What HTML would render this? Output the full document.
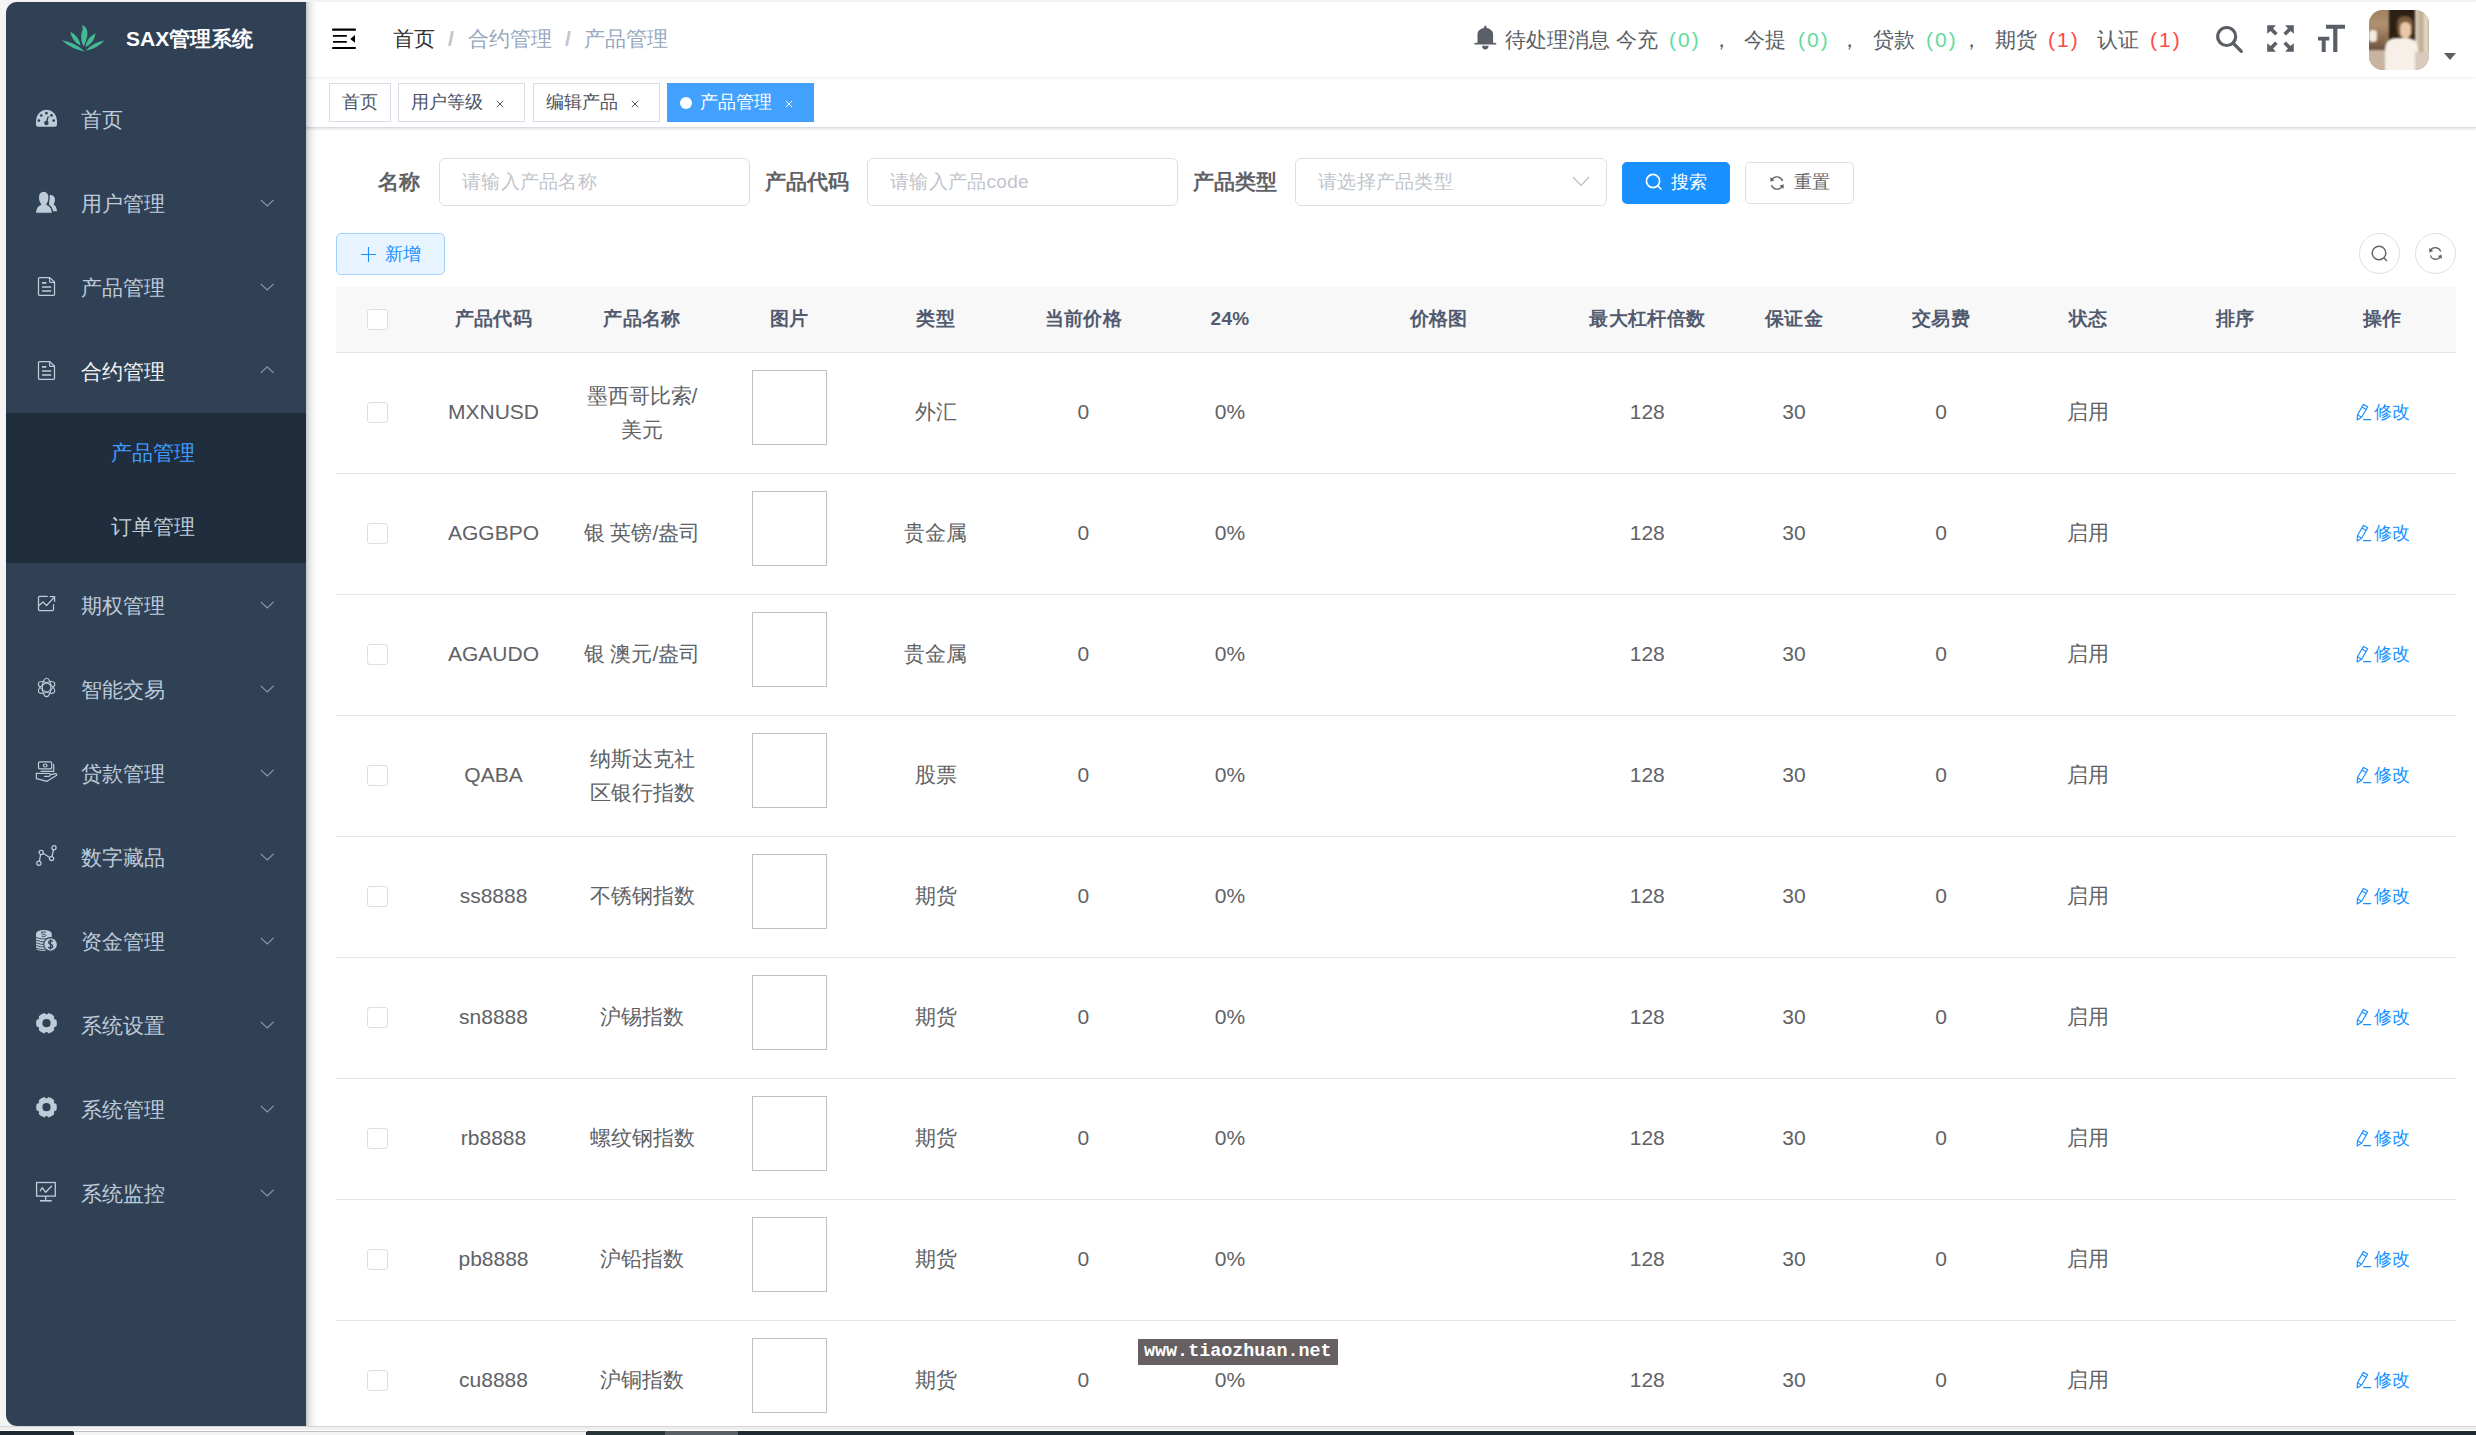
<!DOCTYPE html><html><head><meta charset="utf-8"><style>
*{box-sizing:border-box;margin:0;padding:0}
html,body{width:2476px;height:1435px;overflow:hidden;background:#f4f4f4;font-family:"Liberation Sans", sans-serif;}
.a{position:absolute}
.t{position:absolute;white-space:nowrap}
</style></head><body>
<div class="a" style="left:0px;top:1426px;width:2476px;height:1px;z-index:0;background:#d6d6d6"></div>
<div class="a" style="left:0px;top:1427px;width:2476px;height:3px;z-index:0;background:#efefef"></div>
<div class="a" style="left:0px;top:1430px;width:2476px;height:1px;z-index:0;background:#fff"></div>
<div class="a" style="left:0px;top:1431px;width:2476px;height:4px;z-index:0;background:#1f2a30"></div>
<div class="a" style="left:73px;top:1431px;width:514px;height:1px;z-index:0;background:#c0c0c0"></div>
<div class="a" style="left:74px;top:1432px;width:512px;height:3px;z-index:0;background:#f4f4f4"></div>
<div class="a" style="left:587px;top:1431px;width:78px;height:4px;z-index:0;background:#283539"></div>
<div class="a" style="left:665px;top:1431px;width:73px;height:4px;z-index:0;background:#596064"></div>
<div class="a" style="left:306px;top:2px;width:2170px;height:1424px;z-index:0;background:#fff"></div>
<div class="a" style="left:6px;top:2px;width:300px;height:1424px;z-index:3;background:#304156;border-radius:11px 0 0 11px"></div>
<div class="a" style="left:306px;top:2px;width:12px;height:1424px;z-index:3;background:linear-gradient(90deg,rgba(0,21,41,.24),rgba(0,21,41,.12) 25%,rgba(0,21,41,.04) 60%,rgba(0,21,41,0))"></div>
<svg class="a" style="left:0px;top:0px;z-index:6" width="120" height="60" viewBox="0 0 120 60"><g fill="#45b894"><path d="M83.6 46.4 C80.6 41 80.6 35 82.4 30.5 C83 28.8 82.6 26.6 82 25 C85.2 26 87.6 29.2 87.4 33.6 C87.2 38.6 85.6 42.6 83.6 46.4Z"/><path d="M80.70 45.80 Q79.19 36.06 70.30 31.80 Q71.81 41.54 80.70 45.80Z"/><path d="M85.20 47.20 Q94.13 42.96 95.70 33.20 Q86.77 37.44 85.20 47.20Z"/><path d="M84.80 51.40 Q74.95 42.43 61.80 40.30 Q71.65 49.27 84.80 51.40Z"/><path d="M85.40 50.80 Q96.80 49.00 104.60 40.50 Q93.20 42.30 85.40 50.80Z"/></g></svg>
<div class="t" style="left:126px;top:27px;font-size:21px;line-height:24px;color:#fff;font-weight:bold;z-index:6;">SAX管理系统</div>
<svg class="a" style="left:32px;top:103px;z-index:6" width="30" height="30" viewBox="0 0 30 30"><path fill="#bfcbd9" d="M4 17.3 A10.5 10.5 0 0 1 25 17.3 L25 21.6 Q25 23.8 22.8 23.8 L6.2 23.8 Q4 23.8 4 21.6Z"/><g fill="#304156"><circle cx="6.9" cy="17.6" r="1.35"/><circle cx="9.3" cy="12.5" r="1.35"/><circle cx="14.4" cy="10.2" r="1.35"/><circle cx="19.5" cy="12.4" r="1.35"/><circle cx="21.7" cy="17.6" r="1.35"/><path d="M15.6 13.2 L16.9 13.6 L15.2 19.5 L13.7 19.2Z"/><circle cx="14.4" cy="20.1" r="2.25"/></g></svg>
<div class="t" style="left:81px;top:108px;font-size:21px;line-height:24px;color:#bfcbd9;font-weight:normal;z-index:6;">首页</div>
<svg class="a" style="left:32px;top:187px;z-index:6" width="30" height="30" viewBox="0 0 30 30"><g fill="#bfcbd9"><path d="M17.6 8 C21 7.6 23.2 10 23 13 C22.9 14.8 22.2 16.3 21.6 17.5 C23.5 18.6 24.8 21 25 24.3 L21 24.3 C20.6 21.5 19.2 19 17 17.8Z"/></g><path fill="#bfcbd9" stroke="#304156" stroke-width="1.1" d="M11.7 4.2 C15.2 4.2 17.2 7.2 17 11 C16.9 13.8 15.9 16 14.9 17.4 C18.6 18.6 20.3 22 20.3 26.2 L3.5 26.2 C3.5 22 5.2 18.6 8.6 17.4 C7.5 16 6.5 13.8 6.4 11 C6.2 7.2 8.2 4.2 11.7 4.2Z"/></svg>
<div class="t" style="left:81px;top:192px;font-size:21px;line-height:24px;color:#bfcbd9;font-weight:normal;z-index:6;">用户管理</div>
<svg class="a" style="left:259.5px;top:198.9px;z-index:6" width="15" height="9" viewBox="0 0 15 9"><path d="M0.8 0.8 L7.2 6.9 L13.6 0.8" fill="none" stroke="#8e99a8" stroke-width="1.15"/></svg>
<svg class="a" style="left:32px;top:271px;z-index:6" width="30" height="30" viewBox="0 0 30 30"><g fill="none" stroke="#bfcbd9" stroke-width="1.25" stroke-linejoin="round"><path d="M7.6 6.6 L17.8 6.6 L22.5 11 L22.5 23.6 Q22.5 24.4 21.7 24.4 L7.3 24.4 Q6.5 24.4 6.5 23.6 L6.5 7.6 Q6.5 6.6 7.6 6.6Z"/><path d="M17.6 7 L17.6 10.6 Q17.6 11.4 18.4 11.4 L22.2 11.4"/></g><g stroke="#bfcbd9" stroke-width="1.7"><path d="M10 11.9 L14.4 11.9 M10 16 L19.2 16 M10 20 L19.2 20"/></g></svg>
<div class="t" style="left:81px;top:276px;font-size:21px;line-height:24px;color:#bfcbd9;font-weight:normal;z-index:6;">产品管理</div>
<svg class="a" style="left:259.5px;top:282.9px;z-index:6" width="15" height="9" viewBox="0 0 15 9"><path d="M0.8 0.8 L7.2 6.9 L13.6 0.8" fill="none" stroke="#8e99a8" stroke-width="1.15"/></svg>
<svg class="a" style="left:32px;top:355px;z-index:6" width="30" height="30" viewBox="0 0 30 30"><g fill="none" stroke="#bfcbd9" stroke-width="1.25" stroke-linejoin="round"><path d="M7.6 6.6 L17.8 6.6 L22.5 11 L22.5 23.6 Q22.5 24.4 21.7 24.4 L7.3 24.4 Q6.5 24.4 6.5 23.6 L6.5 7.6 Q6.5 6.6 7.6 6.6Z"/><path d="M17.6 7 L17.6 10.6 Q17.6 11.4 18.4 11.4 L22.2 11.4"/></g><g stroke="#bfcbd9" stroke-width="1.7"><path d="M10 11.9 L14.4 11.9 M10 16 L19.2 16 M10 20 L19.2 20"/></g></svg>
<div class="t" style="left:81px;top:360px;font-size:21px;line-height:24px;color:#f4f4f5;font-weight:normal;z-index:6;">合约管理</div>
<svg class="a" style="left:259.5px;top:365.6px;z-index:6" width="15" height="9" viewBox="0 0 15 9"><path d="M0.8 6.9 L7.2 0.8 L13.6 6.9" fill="none" stroke="#8e99a8" stroke-width="1.15"/></svg>
<div class="a" style="left:6px;top:413px;width:300px;height:150px;z-index:4;background:#1f2d3d"></div>
<div class="t" style="left:111px;top:440.5px;font-size:21px;line-height:24px;color:#409eff;font-weight:normal;z-index:6;">产品管理</div>
<div class="t" style="left:111px;top:515px;font-size:21px;line-height:24px;color:#bfcbd9;font-weight:normal;z-index:6;">订单管理</div>
<svg class="a" style="left:32px;top:589px;z-index:6" width="30" height="30" viewBox="0 0 30 30"><g fill="none" stroke="#bfcbd9" stroke-width="1.25" stroke-linejoin="round" stroke-linecap="round"><path d="M15.3 7.3 L7.5 7.3 Q6.5 7.3 6.5 8.3 L6.5 20.5 Q6.5 21.5 7.5 21.5 L20.5 21.5 Q21.5 21.5 21.5 20.5 L21.5 15.5"/><path d="M6.9 16.5 L10.9 13 L14.6 16.5 L22.2 8.4"/><path d="M18.2 7.5 L22.6 7.5 L22.6 12.3"/></g></svg>
<div class="t" style="left:81px;top:594px;font-size:21px;line-height:24px;color:#bfcbd9;font-weight:normal;z-index:6;">期权管理</div>
<svg class="a" style="left:259.5px;top:600.9px;z-index:6" width="15" height="9" viewBox="0 0 15 9"><path d="M0.8 0.8 L7.2 6.9 L13.6 0.8" fill="none" stroke="#8e99a8" stroke-width="1.15"/></svg>
<svg class="a" style="left:32px;top:673px;z-index:6" width="30" height="30" viewBox="0 0 30 30"><g fill="none" stroke="#bfcbd9" stroke-width="1.15"><ellipse cx="14.6" cy="14.4" rx="4.3" ry="9.2"/><ellipse cx="14.6" cy="14.4" rx="4.3" ry="9.2" transform="rotate(60 14.6 14.4)"/><ellipse cx="14.6" cy="14.4" rx="4.3" ry="9.2" transform="rotate(120 14.6 14.4)"/></g></svg>
<div class="t" style="left:81px;top:678px;font-size:21px;line-height:24px;color:#bfcbd9;font-weight:normal;z-index:6;">智能交易</div>
<svg class="a" style="left:259.5px;top:684.9px;z-index:6" width="15" height="9" viewBox="0 0 15 9"><path d="M0.8 0.8 L7.2 6.9 L13.6 0.8" fill="none" stroke="#8e99a8" stroke-width="1.15"/></svg>
<svg class="a" style="left:32px;top:757px;z-index:6" width="30" height="30" viewBox="0 0 30 30"><g fill="none" stroke="#bfcbd9" stroke-width="1.2" stroke-linejoin="round" stroke-linecap="round"><rect x="6.5" y="4.8" width="13.2" height="7" rx="1"/><ellipse cx="13.2" cy="8.5" rx="1.9" ry="1.5"/><path d="M21.7 7.3 L21.7 14.4 L9.2 14.4"/><path d="M4.4 16.3 L17.5 16.5 Q18.6 16.8 18.3 18.3 Q17.8 19.4 16.8 19.4 L12.5 19.4"/><path d="M4.4 16.3 L4.4 21.7 L15 24.3 L24.7 18.2 Q24.6 16.6 23.2 16.7 L18.8 17.6"/></g></svg>
<div class="t" style="left:81px;top:762px;font-size:21px;line-height:24px;color:#bfcbd9;font-weight:normal;z-index:6;">贷款管理</div>
<svg class="a" style="left:259.5px;top:768.9px;z-index:6" width="15" height="9" viewBox="0 0 15 9"><path d="M0.8 0.8 L7.2 6.9 L13.6 0.8" fill="none" stroke="#8e99a8" stroke-width="1.15"/></svg>
<svg class="a" style="left:32px;top:841px;z-index:6" width="30" height="30" viewBox="0 0 30 30"><g fill="none" stroke="#bfcbd9" stroke-width="1.25"><circle cx="9.2" cy="11.4" r="2.1"/><circle cx="22" cy="6.7" r="2.1"/><circle cx="19.6" cy="17.6" r="2.1"/><circle cx="6.9" cy="22.3" r="2.1"/><path d="M7.4 20.2 L8.6 13.5 M11.2 12.2 L17.6 16.6 M20 15.5 L21.4 8.8"/></g></svg>
<div class="t" style="left:81px;top:846px;font-size:21px;line-height:24px;color:#bfcbd9;font-weight:normal;z-index:6;">数字藏品</div>
<svg class="a" style="left:259.5px;top:852.9px;z-index:6" width="15" height="9" viewBox="0 0 15 9"><path d="M0.8 0.8 L7.2 6.9 L13.6 0.8" fill="none" stroke="#8e99a8" stroke-width="1.15"/></svg>
<svg class="a" style="left:32px;top:925px;z-index:6" width="30" height="30" viewBox="0 0 30 30"><g fill="#bfcbd9"><path d="M4 8.8 A7.9 3.8 0 0 1 19.8 8.8 L19.8 14 L13 25.9 Q4 26 4 23 Z"/></g><g fill="none" stroke="#304156" stroke-width="0.9"><path d="M4 12.5 Q11.9 15.5 19.8 12.3"/><path d="M4 15.2 Q9 17.2 13.5 16.8"/><path d="M4 17.8 Q9 19.8 12.6 19.4"/><path d="M4 20.5 Q9 22.5 12.6 22"/><path d="M4 23.1 Q9 25 13 24.7"/><path d="M14 7.3 Q11.5 6.3 9.6 7.2 Q8.6 8 10.2 8.8 L13.2 9.6 Q14.6 10.5 13.3 11.2 Q11.5 12 9.3 10.9"/></g><circle cx="18.6" cy="19.4" r="6.8" fill="#bfcbd9" stroke="#304156" stroke-width="1.1"/><g fill="none" stroke="#304156" stroke-width="1.3"><path d="M20.9 16.6 Q19.8 15.6 18.4 15.7 Q16.6 15.9 16.6 17.4 Q16.7 18.7 18.7 19.3 Q20.8 20 20.8 21.4 Q20.7 23 18.6 23.1 Q17 23.1 16.1 22.2 M18.5 14.2 L18.5 24.6"/></g></svg>
<div class="t" style="left:81px;top:930px;font-size:21px;line-height:24px;color:#bfcbd9;font-weight:normal;z-index:6;">资金管理</div>
<svg class="a" style="left:259.5px;top:936.9px;z-index:6" width="15" height="9" viewBox="0 0 15 9"><path d="M0.8 0.8 L7.2 6.9 L13.6 0.8" fill="none" stroke="#8e99a8" stroke-width="1.15"/></svg>
<svg class="a" style="left:32px;top:1009px;z-index:6" width="30" height="30" viewBox="0 0 30 30"><path fill="#bfcbd9" fill-rule="evenodd" d="M24.33 10.81 Q25.50 14.20 24.33 17.59 Q20.91 17.90 22.35 21.02 Q20.00 23.73 16.48 24.41 Q14.50 21.60 12.52 24.41 Q9.00 23.73 6.65 21.02 Q8.09 17.90 4.67 17.59 Q3.50 14.20 4.67 10.81 Q8.09 10.50 6.65 7.38 Q9.00 4.67 12.52 3.99 Q14.50 6.80 16.48 3.99 Q20.00 4.67 22.35 7.38 Q20.91 10.50 24.33 10.81Z M18.60 14.20 A4.1 4.1 0 1 0 10.40 14.20 A4.1 4.1 0 1 0 18.60 14.20Z"/></svg>
<div class="t" style="left:81px;top:1014px;font-size:21px;line-height:24px;color:#bfcbd9;font-weight:normal;z-index:6;">系统设置</div>
<svg class="a" style="left:259.5px;top:1020.9px;z-index:6" width="15" height="9" viewBox="0 0 15 9"><path d="M0.8 0.8 L7.2 6.9 L13.6 0.8" fill="none" stroke="#8e99a8" stroke-width="1.15"/></svg>
<svg class="a" style="left:32px;top:1093px;z-index:6" width="30" height="30" viewBox="0 0 30 30"><path fill="#bfcbd9" fill-rule="evenodd" d="M24.33 10.81 Q25.50 14.20 24.33 17.59 Q20.91 17.90 22.35 21.02 Q20.00 23.73 16.48 24.41 Q14.50 21.60 12.52 24.41 Q9.00 23.73 6.65 21.02 Q8.09 17.90 4.67 17.59 Q3.50 14.20 4.67 10.81 Q8.09 10.50 6.65 7.38 Q9.00 4.67 12.52 3.99 Q14.50 6.80 16.48 3.99 Q20.00 4.67 22.35 7.38 Q20.91 10.50 24.33 10.81Z M18.60 14.20 A4.1 4.1 0 1 0 10.40 14.20 A4.1 4.1 0 1 0 18.60 14.20Z"/></svg>
<div class="t" style="left:81px;top:1098px;font-size:21px;line-height:24px;color:#bfcbd9;font-weight:normal;z-index:6;">系统管理</div>
<svg class="a" style="left:259.5px;top:1104.9px;z-index:6" width="15" height="9" viewBox="0 0 15 9"><path d="M0.8 0.8 L7.2 6.9 L13.6 0.8" fill="none" stroke="#8e99a8" stroke-width="1.15"/></svg>
<svg class="a" style="left:32px;top:1177px;z-index:6" width="30" height="30" viewBox="0 0 30 30"><g fill="none" stroke="#bfcbd9" stroke-width="1.3"><rect x="4.6" y="5.5" width="18.7" height="13.6"/><path d="M13.7 19.1 L13.7 23.4"/><path d="M7.9 23.8 L19.7 23.8" stroke-width="1.6"/><path d="M8.3 13.7 L10.3 10.7 L13.7 15.3 L19.5 9.2" stroke-linecap="round" stroke-linejoin="round"/></g></svg>
<div class="t" style="left:81px;top:1182px;font-size:21px;line-height:24px;color:#bfcbd9;font-weight:normal;z-index:6;">系统监控</div>
<svg class="a" style="left:259.5px;top:1188.9px;z-index:6" width="15" height="9" viewBox="0 0 15 9"><path d="M0.8 0.8 L7.2 6.9 L13.6 0.8" fill="none" stroke="#8e99a8" stroke-width="1.15"/></svg>
<div class="a" style="left:306px;top:2px;width:2170px;height:75px;z-index:2;background:#fff;box-shadow:0 1px 4px rgba(0,21,41,.08)"></div>
<svg class="a" style="left:332px;top:28px;z-index:5" width="25" height="22" viewBox="0 0 25 22"><g fill="#000"><rect x="0" y="0.6" width="24" height="2.2" rx="1"/><rect x="0.8" y="7" width="14.2" height="1.8" rx="0.9"/><rect x="0.8" y="13" width="14.2" height="1.8" rx="0.9"/><rect x="0" y="19.1" width="24" height="1.9" rx="0.9"/><path d="M23 7 L23 14.8 L18.3 10.9Z"/></g></svg>
<div class="t" style="left:393px;top:27px;font-size:21px;line-height:24px;color:#303133;font-weight:normal;z-index:5;">首页</div>
<div class="t" style="left:448px;top:27px;font-size:21px;line-height:24px;color:#c0c4cc;font-weight:normal;z-index:5;font-weight:bold;">/</div>
<div class="t" style="left:468px;top:27px;font-size:21px;line-height:24px;color:#97a8be;font-weight:normal;z-index:5;">合约管理</div>
<div class="t" style="left:565px;top:27px;font-size:21px;line-height:24px;color:#c0c4cc;font-weight:normal;z-index:5;font-weight:bold;">/</div>
<div class="t" style="left:584px;top:27px;font-size:21px;line-height:24px;color:#97a8be;font-weight:normal;z-index:5;">产品管理</div>
<svg class="a" style="left:1468px;top:20px;z-index:5" width="34" height="34" viewBox="0 0 34 34"><path fill="#5a5e66" d="M17.3 5.6 C18 5.6 18.5 6.5 18.6 7.9 C22.5 8.5 25.1 10.8 25.1 14.5 L25.1 22.7 L28.2 23 L28.2 24.6 L6.4 24.6 L6.4 23 L9.5 22.7 L9.5 14.5 C9.5 10.8 12.1 8.5 16 7.9 C16.1 6.5 16.6 5.6 17.3 5.6Z M14 25.8 L20.6 25.8 C20.6 28 19.1 29.6 17.3 29.6 C15.5 29.6 14 28 14 25.8Z"/></svg>
<div class="t" style="left:1505px;top:28px;font-size:21px;line-height:24px;color:#5a5e66;font-weight:normal;z-index:5;">待处理消息</div>
<div class="t" style="left:1616px;top:28px;font-size:21px;line-height:24px;color:#5a5e66;font-weight:normal;z-index:5;">今充</div>
<div class="t" style="left:1669px;top:28px;font-size:21px;line-height:24px;color:#62dc9c;font-weight:normal;z-index:5;letter-spacing:2px">(0)</div>
<div class="t" style="left:1711px;top:28px;font-size:21px;line-height:24px;color:#5a5e66;font-weight:normal;z-index:5;">，</div>
<div class="t" style="left:1744px;top:28px;font-size:21px;line-height:24px;color:#5a5e66;font-weight:normal;z-index:5;">今提</div>
<div class="t" style="left:1798px;top:28px;font-size:21px;line-height:24px;color:#62dc9c;font-weight:normal;z-index:5;letter-spacing:2px">(0)</div>
<div class="t" style="left:1839px;top:28px;font-size:21px;line-height:24px;color:#5a5e66;font-weight:normal;z-index:5;">，</div>
<div class="t" style="left:1873px;top:28px;font-size:21px;line-height:24px;color:#5a5e66;font-weight:normal;z-index:5;">贷款</div>
<div class="t" style="left:1926px;top:28px;font-size:21px;line-height:24px;color:#62dc9c;font-weight:normal;z-index:5;letter-spacing:2px">(0)</div>
<div class="t" style="left:1961px;top:28px;font-size:21px;line-height:24px;color:#5a5e66;font-weight:normal;z-index:5;">，</div>
<div class="t" style="left:1995px;top:28px;font-size:21px;line-height:24px;color:#5a5e66;font-weight:normal;z-index:5;">期货</div>
<div class="t" style="left:2048px;top:28px;font-size:21px;line-height:24px;color:#ff4949;font-weight:normal;z-index:5;letter-spacing:2px">(1)</div>
<div class="t" style="left:2097px;top:28px;font-size:21px;line-height:24px;color:#5a5e66;font-weight:normal;z-index:5;">认证</div>
<div class="t" style="left:2150px;top:28px;font-size:21px;line-height:24px;color:#ff4949;font-weight:normal;z-index:5;letter-spacing:2px">(1)</div>
<svg class="a" style="left:2214px;top:24px;z-index:5" width="32" height="32" viewBox="0 0 32 32"><g fill="none" stroke="#5a5e66" stroke-width="3.2" stroke-linecap="round"><circle cx="12.7" cy="12.5" r="9"/><path d="M19.5 19.5 L27.3 27.3"/></g></svg>
<svg class="a" style="left:2262px;top:20px;z-index:5" width="38" height="38" viewBox="0 0 38 38"><g fill="#5a5e66"><path d="M5.2 5.2 L13.8 5.2 L11.1 8.5 L15.6 13 L13.2 15.6 L8.5 10.9 L5.2 13.8Z"/><path d="M31.8 5.2 L23.2 5.2 L25.9 8.5 L21.4 13.0 L23.8 15.6 L28.5 10.9 L31.8 13.8 Z"/><path d="M5.2 31.8 L13.8 31.8 L11.1 28.5 L15.6 24.0 L13.2 21.4 L8.5 26.1 L5.2 23.2 Z"/><path d="M31.8 31.8 L23.2 31.8 L25.9 28.5 L21.4 24.0 L23.8 21.4 L28.5 26.1 L31.8 23.2 Z"/></g></svg>
<svg class="a" style="left:2318px;top:24px;z-index:5" width="28" height="29" viewBox="0 0 28 29"><path fill="#5a5e66" d="M8 0.8 L27 0.8 L27 4.8 L19.4 4.8 L19.4 28 L15.2 28 L15.2 4.8 L8 4.8Z M0 12.7 L11.3 12.7 L11.3 16.4 L7.7 16.4 L7.7 28 L3.7 28 L3.7 16.4 L0 16.4Z"/></svg>
<div class="a" style="left:2369px;top:10px;width:60px;height:60px;border-radius:14px;overflow:hidden;z-index:5;background:#b8a288">
<div class="a" style="left:-2px;top:-2px;width:64px;height:64px;filter:blur(1.2px)">
<div class="a" style="left:0;top:0;width:24px;height:42px;background:linear-gradient(180deg,#9c8060,#b09070 40%,#8a6c50 75%,#6a5240)"></div>
<div class="a" style="left:2px;top:22px;width:8px;height:12px;background:#f0ece4;border-radius:3px"></div>
<div class="a" style="left:0;top:42px;width:24px;height:22px;background:#c8b4a0"></div>
<div class="a" style="left:22px;top:0;width:28px;height:32px;background:#2c2014"></div>
<div class="a" style="left:48px;top:0;width:16px;height:64px;background:linear-gradient(90deg,#e4d8c8,#bca88c 40%,#ece0d0 70%,#a89478)"></div>
<div class="a" style="left:30px;top:8px;width:16px;height:22px;border-radius:7px;background:#7a5a3a"></div>
<div class="a" style="left:33px;top:14px;width:11px;height:16px;border-radius:5px;background:#e8c8a8"></div>
<div class="a" style="left:18px;top:30px;width:33px;height:34px;border-radius:10px 10px 0 0;background:#f6f0e8"></div>
<div class="a" style="left:48px;top:44px;width:16px;height:20px;background:#d8cabc"></div>
</div></div>
<svg class="a" style="left:2444px;top:53px;z-index:5" width="12" height="8" viewBox="0 0 12 8"><path d="M0 0 L12 0 L6 7Z" fill="#5a5e66"/></svg>
<div class="a" style="left:306px;top:77px;width:2170px;height:51px;z-index:1;background:#fff;border-bottom:1px solid #d8dce5;box-shadow:0 1px 3px 0 rgba(0,0,0,.12),0 0 3px 0 rgba(0,0,0,.04)"></div>
<div class="a" style="left:329px;top:83px;width:62px;height:39px;z-index:2;border:1px solid #d8dce5;background:#fff"></div>
<div class="a" style="left:398px;top:83px;width:127px;height:39px;z-index:2;border:1px solid #d8dce5;background:#fff"></div>
<div class="a" style="left:533px;top:83px;width:127px;height:39px;z-index:2;border:1px solid #d8dce5;background:#fff"></div>
<div class="a" style="left:667px;top:83px;width:147px;height:39px;z-index:2;background:#42a0ff"></div>
<div class="t" style="left:342px;top:91px;font-size:18px;line-height:22px;color:#495060;font-weight:normal;z-index:5;">首页</div>
<div class="t" style="left:411px;top:91px;font-size:18px;line-height:22px;color:#495060;font-weight:normal;z-index:5;">用户等级</div>
<div class="t" style="left:546px;top:91px;font-size:18px;line-height:22px;color:#495060;font-weight:normal;z-index:5;">编辑产品</div>
<div class="t" style="left:700px;top:91px;font-size:18px;line-height:22px;color:#fff;font-weight:normal;z-index:5;">产品管理</div>
<svg class="a" style="left:496px;top:100px;z-index:5" width="8" height="8" viewBox="0 0 8 8"><path d="M0.8 0.8 L7.2 7.2 M7.2 0.8 L0.8 7.2" stroke="#495060" stroke-width="1"/></svg>
<svg class="a" style="left:631px;top:100px;z-index:5" width="8" height="8" viewBox="0 0 8 8"><path d="M0.8 0.8 L7.2 7.2 M7.2 0.8 L0.8 7.2" stroke="#495060" stroke-width="1"/></svg>
<svg class="a" style="left:785px;top:100px;z-index:5" width="8" height="8" viewBox="0 0 8 8"><path d="M0.8 0.8 L7.2 7.2 M7.2 0.8 L0.8 7.2" stroke="#fff" stroke-width="1"/></svg>
<div class="a" style="left:680px;top:97px;width:12px;height:12px;z-index:5;border-radius:50%;background:#fff"></div>
<div class="t" style="left:378px;top:170px;font-size:21px;line-height:24px;color:#606266;font-weight:bold;z-index:5;">名称</div>
<div class="t" style="left:765px;top:170px;font-size:21px;line-height:24px;color:#606266;font-weight:bold;z-index:5;">产品代码</div>
<div class="t" style="left:1193px;top:170px;font-size:21px;line-height:24px;color:#606266;font-weight:bold;z-index:5;">产品类型</div>
<div class="a" style="left:439px;top:158px;width:311px;height:48px;z-index:2;border:1px solid #dcdfe6;border-radius:6px;background:#fff"></div>
<div class="t" style="left:462px;top:170px;font-size:19px;line-height:24px;color:#c0c4cc;font-weight:normal;z-index:5;letter-spacing:0.3px">请输入产品名称</div>
<div class="a" style="left:867px;top:158px;width:311px;height:48px;z-index:2;border:1px solid #dcdfe6;border-radius:6px;background:#fff"></div>
<div class="t" style="left:890px;top:170px;font-size:19px;line-height:24px;color:#c0c4cc;font-weight:normal;z-index:5;letter-spacing:0.3px">请输入产品code</div>
<div class="a" style="left:1295px;top:158px;width:312px;height:48px;z-index:2;border:1px solid #dcdfe6;border-radius:6px;background:#fff"></div>
<div class="t" style="left:1318px;top:170px;font-size:19px;line-height:24px;color:#c0c4cc;font-weight:normal;z-index:5;letter-spacing:0.3px">请选择产品类型</div>
<svg class="a" style="left:1572px;top:176px;z-index:5" width="18" height="11" viewBox="0 0 18 11"><path d="M1 1 L9 9.5 L17 1" fill="none" stroke="#c0c4cc" stroke-width="1.4"/></svg>
<div class="a" style="left:1622px;top:162px;width:108px;height:42px;z-index:2;border-radius:5px;background:#1890ff"></div>
<svg class="a" style="left:1645px;top:173px;z-index:5" width="18" height="18" viewBox="0 0 18 18"><g fill="none" stroke="#fff" stroke-width="1.7"><circle cx="8" cy="8" r="6.6"/><path d="M12.8 12.8 L16.5 16.5"/></g></svg>
<div class="t" style="left:1671px;top:171px;font-size:18px;line-height:22px;color:#fff;font-weight:normal;z-index:5;">搜索</div>
<div class="a" style="left:1745px;top:162px;width:109px;height:42px;z-index:2;border-radius:5px;border:1px solid #dcdfe6;background:#fff"></div>
<svg class="a" style="left:1769px;top:175px;z-index:5" width="16" height="16" viewBox="0 0 16 16"><g fill="none" stroke="#606266" stroke-width="1.4"><path d="M13.5 6 A6 6 0 0 0 2.5 5"/><path d="M2.5 10 A6 6 0 0 0 13.5 11"/></g><g fill="#606266"><path d="M1.2 2.2 L1.5 6.8 L5.6 5.3Z"/><path d="M14.8 13.8 L14.5 9.2 L10.4 10.7Z"/></g></svg>
<div class="t" style="left:1794px;top:171px;font-size:18px;line-height:22px;color:#606266;font-weight:normal;z-index:5;">重置</div>
<div class="a" style="left:336px;top:233px;width:109px;height:42px;z-index:2;border-radius:5px;border:1px solid #a3d0fd;background:#e8f4ff"></div>
<svg class="a" style="left:361px;top:247px;z-index:5" width="16" height="16" viewBox="0 0 16 16"><path d="M7.5 0 L7.5 15 M0 7.5 L15 7.5" stroke="#1890ff" stroke-width="1.1"/></svg>
<div class="t" style="left:385px;top:243px;font-size:18px;line-height:22px;color:#1890ff;font-weight:normal;z-index:5;">新增</div>
<div class="a" style="left:2359px;top:233px;width:41px;height:41px;z-index:2;border-radius:50%;border:1px solid #dcdfe6;background:#fff"></div>
<div class="a" style="left:2415px;top:233px;width:41px;height:41px;z-index:2;border-radius:50%;border:1px solid #dcdfe6;background:#fff"></div>
<svg class="a" style="left:2371px;top:245px;z-index:5" width="17" height="17" viewBox="0 0 17 17"><g fill="none" stroke="#606266" stroke-width="1.4"><circle cx="8" cy="8" r="6.8"/><path d="M12.8 12.8 L16 16"/></g></svg>
<svg class="a" style="left:2428px;top:246px;z-index:5" width="15" height="15" viewBox="0 0 16 16"><g fill="none" stroke="#606266" stroke-width="1.4"><path d="M13.5 6 A6 6 0 0 0 2.5 5"/><path d="M2.5 10 A6 6 0 0 0 13.5 11"/></g><g fill="#606266"><path d="M1.2 2.2 L1.5 6.8 L5.6 5.3Z"/><path d="M14.8 13.8 L14.5 9.2 L10.4 10.7Z"/></g></svg>
<div class="a" style="left:336px;top:287px;width:2120px;height:66px;z-index:1;background:#f8f8f9;border-bottom:1px solid #dfe6ec"></div>
<div class="t" style="left:343.5px;top:307px;width:300px;text-align:center;font-size:19px;line-height:24px;color:#515a6e;font-weight:bold;z-index:5;letter-spacing:0.3px">产品代码</div>
<div class="t" style="left:492px;top:307px;width:300px;text-align:center;font-size:19px;line-height:24px;color:#515a6e;font-weight:bold;z-index:5;letter-spacing:0.3px">产品名称</div>
<div class="t" style="left:639.25px;top:307px;width:300px;text-align:center;font-size:19px;line-height:24px;color:#515a6e;font-weight:bold;z-index:5;letter-spacing:0.3px">图片</div>
<div class="t" style="left:785.75px;top:307px;width:300px;text-align:center;font-size:19px;line-height:24px;color:#515a6e;font-weight:bold;z-index:5;letter-spacing:0.3px">类型</div>
<div class="t" style="left:933.25px;top:307px;width:300px;text-align:center;font-size:19px;line-height:24px;color:#515a6e;font-weight:bold;z-index:5;letter-spacing:0.3px">当前价格</div>
<div class="t" style="left:1080px;top:307px;width:300px;text-align:center;font-size:19px;line-height:24px;color:#515a6e;font-weight:bold;z-index:5;letter-spacing:0.3px">24%</div>
<div class="t" style="left:1288.5px;top:307px;width:300px;text-align:center;font-size:19px;line-height:24px;color:#515a6e;font-weight:bold;z-index:5;letter-spacing:0.3px">价格图</div>
<div class="t" style="left:1497.25px;top:307px;width:300px;text-align:center;font-size:19px;line-height:24px;color:#515a6e;font-weight:bold;z-index:5;letter-spacing:0.3px">最大杠杆倍数</div>
<div class="t" style="left:1644px;top:307px;width:300px;text-align:center;font-size:19px;line-height:24px;color:#515a6e;font-weight:bold;z-index:5;letter-spacing:0.3px">保证金</div>
<div class="t" style="left:1791px;top:307px;width:300px;text-align:center;font-size:19px;line-height:24px;color:#515a6e;font-weight:bold;z-index:5;letter-spacing:0.3px">交易费</div>
<div class="t" style="left:1938px;top:307px;width:300px;text-align:center;font-size:19px;line-height:24px;color:#515a6e;font-weight:bold;z-index:5;letter-spacing:0.3px">状态</div>
<div class="t" style="left:2085px;top:307px;width:300px;text-align:center;font-size:19px;line-height:24px;color:#515a6e;font-weight:bold;z-index:5;letter-spacing:0.3px">排序</div>
<div class="t" style="left:2232px;top:307px;width:300px;text-align:center;font-size:19px;line-height:24px;color:#515a6e;font-weight:bold;z-index:5;letter-spacing:0.3px">操作</div>
<div class="a" style="left:367px;top:309px;width:21px;height:21px;z-index:2;border:1px solid #dcdfe6;border-radius:3px;background:#fff"></div>
<div class="a" style="left:336px;top:473px;width:2120px;height:1px;z-index:1;background:#dfe6ec"></div>
<div class="a" style="left:367px;top:402px;width:21px;height:21px;z-index:2;border:1px solid #dcdfe6;border-radius:3px;background:#fff"></div>
<div class="t" style="left:343.5px;top:399.5px;width:300px;text-align:center;font-size:21px;line-height:24px;color:#606266;font-weight:normal;z-index:5;">MXNUSD</div>
<div class="t" style="left:492px;top:384px;width:300px;text-align:center;font-size:21px;line-height:24px;color:#606266;font-weight:normal;z-index:5;">墨西哥比索/</div>
<div class="t" style="left:492px;top:417.5px;width:300px;text-align:center;font-size:21px;line-height:24px;color:#606266;font-weight:normal;z-index:5;">美元</div>
<div class="a" style="left:752px;top:370px;width:75px;height:75px;z-index:2;border:1px solid #c0c0c0"></div>
<div class="t" style="left:785.75px;top:399.5px;width:300px;text-align:center;font-size:21px;line-height:24px;color:#606266;font-weight:normal;z-index:5;">外汇</div>
<div class="t" style="left:933.25px;top:399.5px;width:300px;text-align:center;font-size:21px;line-height:24px;color:#606266;font-weight:normal;z-index:5;">0</div>
<div class="t" style="left:1080px;top:399.5px;width:300px;text-align:center;font-size:21px;line-height:24px;color:#606266;font-weight:normal;z-index:5;">0%</div>
<div class="t" style="left:1497.25px;top:399.5px;width:300px;text-align:center;font-size:21px;line-height:24px;color:#606266;font-weight:normal;z-index:5;">128</div>
<div class="t" style="left:1644px;top:399.5px;width:300px;text-align:center;font-size:21px;line-height:24px;color:#606266;font-weight:normal;z-index:5;">30</div>
<div class="t" style="left:1791px;top:399.5px;width:300px;text-align:center;font-size:21px;line-height:24px;color:#606266;font-weight:normal;z-index:5;">0</div>
<div class="t" style="left:1938px;top:399.5px;width:300px;text-align:center;font-size:21px;line-height:24px;color:#606266;font-weight:normal;z-index:5;">启用</div>
<svg class="a" style="left:2354px;top:402px;z-index:5" width="18" height="20" viewBox="0 0 18 20"><g fill="none" stroke="#1890ff" stroke-width="1.15" stroke-linejoin="round"><path d="M9.5 2.4 L13.7 4.8 L7.6 15.2 L3.2 18 L3.4 12.8 Z"/><path d="M8 5 L12.2 7.4 M3.4 12.8 L7.6 15.2"/><path d="M9.5 17.6 L16.7 17.6" stroke-linecap="round"/></g></svg>
<div class="t" style="left:2374px;top:401px;font-size:18px;line-height:22px;color:#1890ff;font-weight:normal;z-index:5;">修改</div>
<div class="a" style="left:336px;top:594px;width:2120px;height:1px;z-index:1;background:#dfe6ec"></div>
<div class="a" style="left:367px;top:523px;width:21px;height:21px;z-index:2;border:1px solid #dcdfe6;border-radius:3px;background:#fff"></div>
<div class="t" style="left:343.5px;top:520.5px;width:300px;text-align:center;font-size:21px;line-height:24px;color:#606266;font-weight:normal;z-index:5;">AGGBPO</div>
<div class="t" style="left:492px;top:520.5px;width:300px;text-align:center;font-size:21px;line-height:24px;color:#606266;font-weight:normal;z-index:5;">银 英镑/盎司</div>
<div class="a" style="left:752px;top:491px;width:75px;height:75px;z-index:2;border:1px solid #c0c0c0"></div>
<div class="t" style="left:785.75px;top:520.5px;width:300px;text-align:center;font-size:21px;line-height:24px;color:#606266;font-weight:normal;z-index:5;">贵金属</div>
<div class="t" style="left:933.25px;top:520.5px;width:300px;text-align:center;font-size:21px;line-height:24px;color:#606266;font-weight:normal;z-index:5;">0</div>
<div class="t" style="left:1080px;top:520.5px;width:300px;text-align:center;font-size:21px;line-height:24px;color:#606266;font-weight:normal;z-index:5;">0%</div>
<div class="t" style="left:1497.25px;top:520.5px;width:300px;text-align:center;font-size:21px;line-height:24px;color:#606266;font-weight:normal;z-index:5;">128</div>
<div class="t" style="left:1644px;top:520.5px;width:300px;text-align:center;font-size:21px;line-height:24px;color:#606266;font-weight:normal;z-index:5;">30</div>
<div class="t" style="left:1791px;top:520.5px;width:300px;text-align:center;font-size:21px;line-height:24px;color:#606266;font-weight:normal;z-index:5;">0</div>
<div class="t" style="left:1938px;top:520.5px;width:300px;text-align:center;font-size:21px;line-height:24px;color:#606266;font-weight:normal;z-index:5;">启用</div>
<svg class="a" style="left:2354px;top:523px;z-index:5" width="18" height="20" viewBox="0 0 18 20"><g fill="none" stroke="#1890ff" stroke-width="1.15" stroke-linejoin="round"><path d="M9.5 2.4 L13.7 4.8 L7.6 15.2 L3.2 18 L3.4 12.8 Z"/><path d="M8 5 L12.2 7.4 M3.4 12.8 L7.6 15.2"/><path d="M9.5 17.6 L16.7 17.6" stroke-linecap="round"/></g></svg>
<div class="t" style="left:2374px;top:522px;font-size:18px;line-height:22px;color:#1890ff;font-weight:normal;z-index:5;">修改</div>
<div class="a" style="left:336px;top:715px;width:2120px;height:1px;z-index:1;background:#dfe6ec"></div>
<div class="a" style="left:367px;top:644px;width:21px;height:21px;z-index:2;border:1px solid #dcdfe6;border-radius:3px;background:#fff"></div>
<div class="t" style="left:343.5px;top:641.5px;width:300px;text-align:center;font-size:21px;line-height:24px;color:#606266;font-weight:normal;z-index:5;">AGAUDO</div>
<div class="t" style="left:492px;top:641.5px;width:300px;text-align:center;font-size:21px;line-height:24px;color:#606266;font-weight:normal;z-index:5;">银 澳元/盎司</div>
<div class="a" style="left:752px;top:612px;width:75px;height:75px;z-index:2;border:1px solid #c0c0c0"></div>
<div class="t" style="left:785.75px;top:641.5px;width:300px;text-align:center;font-size:21px;line-height:24px;color:#606266;font-weight:normal;z-index:5;">贵金属</div>
<div class="t" style="left:933.25px;top:641.5px;width:300px;text-align:center;font-size:21px;line-height:24px;color:#606266;font-weight:normal;z-index:5;">0</div>
<div class="t" style="left:1080px;top:641.5px;width:300px;text-align:center;font-size:21px;line-height:24px;color:#606266;font-weight:normal;z-index:5;">0%</div>
<div class="t" style="left:1497.25px;top:641.5px;width:300px;text-align:center;font-size:21px;line-height:24px;color:#606266;font-weight:normal;z-index:5;">128</div>
<div class="t" style="left:1644px;top:641.5px;width:300px;text-align:center;font-size:21px;line-height:24px;color:#606266;font-weight:normal;z-index:5;">30</div>
<div class="t" style="left:1791px;top:641.5px;width:300px;text-align:center;font-size:21px;line-height:24px;color:#606266;font-weight:normal;z-index:5;">0</div>
<div class="t" style="left:1938px;top:641.5px;width:300px;text-align:center;font-size:21px;line-height:24px;color:#606266;font-weight:normal;z-index:5;">启用</div>
<svg class="a" style="left:2354px;top:644px;z-index:5" width="18" height="20" viewBox="0 0 18 20"><g fill="none" stroke="#1890ff" stroke-width="1.15" stroke-linejoin="round"><path d="M9.5 2.4 L13.7 4.8 L7.6 15.2 L3.2 18 L3.4 12.8 Z"/><path d="M8 5 L12.2 7.4 M3.4 12.8 L7.6 15.2"/><path d="M9.5 17.6 L16.7 17.6" stroke-linecap="round"/></g></svg>
<div class="t" style="left:2374px;top:643px;font-size:18px;line-height:22px;color:#1890ff;font-weight:normal;z-index:5;">修改</div>
<div class="a" style="left:336px;top:836px;width:2120px;height:1px;z-index:1;background:#dfe6ec"></div>
<div class="a" style="left:367px;top:765px;width:21px;height:21px;z-index:2;border:1px solid #dcdfe6;border-radius:3px;background:#fff"></div>
<div class="t" style="left:343.5px;top:762.5px;width:300px;text-align:center;font-size:21px;line-height:24px;color:#606266;font-weight:normal;z-index:5;">QABA</div>
<div class="t" style="left:492px;top:747px;width:300px;text-align:center;font-size:21px;line-height:24px;color:#606266;font-weight:normal;z-index:5;">纳斯达克社</div>
<div class="t" style="left:492px;top:780.5px;width:300px;text-align:center;font-size:21px;line-height:24px;color:#606266;font-weight:normal;z-index:5;">区银行指数</div>
<div class="a" style="left:752px;top:733px;width:75px;height:75px;z-index:2;border:1px solid #c0c0c0"></div>
<div class="t" style="left:785.75px;top:762.5px;width:300px;text-align:center;font-size:21px;line-height:24px;color:#606266;font-weight:normal;z-index:5;">股票</div>
<div class="t" style="left:933.25px;top:762.5px;width:300px;text-align:center;font-size:21px;line-height:24px;color:#606266;font-weight:normal;z-index:5;">0</div>
<div class="t" style="left:1080px;top:762.5px;width:300px;text-align:center;font-size:21px;line-height:24px;color:#606266;font-weight:normal;z-index:5;">0%</div>
<div class="t" style="left:1497.25px;top:762.5px;width:300px;text-align:center;font-size:21px;line-height:24px;color:#606266;font-weight:normal;z-index:5;">128</div>
<div class="t" style="left:1644px;top:762.5px;width:300px;text-align:center;font-size:21px;line-height:24px;color:#606266;font-weight:normal;z-index:5;">30</div>
<div class="t" style="left:1791px;top:762.5px;width:300px;text-align:center;font-size:21px;line-height:24px;color:#606266;font-weight:normal;z-index:5;">0</div>
<div class="t" style="left:1938px;top:762.5px;width:300px;text-align:center;font-size:21px;line-height:24px;color:#606266;font-weight:normal;z-index:5;">启用</div>
<svg class="a" style="left:2354px;top:765px;z-index:5" width="18" height="20" viewBox="0 0 18 20"><g fill="none" stroke="#1890ff" stroke-width="1.15" stroke-linejoin="round"><path d="M9.5 2.4 L13.7 4.8 L7.6 15.2 L3.2 18 L3.4 12.8 Z"/><path d="M8 5 L12.2 7.4 M3.4 12.8 L7.6 15.2"/><path d="M9.5 17.6 L16.7 17.6" stroke-linecap="round"/></g></svg>
<div class="t" style="left:2374px;top:764px;font-size:18px;line-height:22px;color:#1890ff;font-weight:normal;z-index:5;">修改</div>
<div class="a" style="left:336px;top:957px;width:2120px;height:1px;z-index:1;background:#dfe6ec"></div>
<div class="a" style="left:367px;top:886px;width:21px;height:21px;z-index:2;border:1px solid #dcdfe6;border-radius:3px;background:#fff"></div>
<div class="t" style="left:343.5px;top:883.5px;width:300px;text-align:center;font-size:21px;line-height:24px;color:#606266;font-weight:normal;z-index:5;">ss8888</div>
<div class="t" style="left:492px;top:883.5px;width:300px;text-align:center;font-size:21px;line-height:24px;color:#606266;font-weight:normal;z-index:5;">不锈钢指数</div>
<div class="a" style="left:752px;top:854px;width:75px;height:75px;z-index:2;border:1px solid #c0c0c0"></div>
<div class="t" style="left:785.75px;top:883.5px;width:300px;text-align:center;font-size:21px;line-height:24px;color:#606266;font-weight:normal;z-index:5;">期货</div>
<div class="t" style="left:933.25px;top:883.5px;width:300px;text-align:center;font-size:21px;line-height:24px;color:#606266;font-weight:normal;z-index:5;">0</div>
<div class="t" style="left:1080px;top:883.5px;width:300px;text-align:center;font-size:21px;line-height:24px;color:#606266;font-weight:normal;z-index:5;">0%</div>
<div class="t" style="left:1497.25px;top:883.5px;width:300px;text-align:center;font-size:21px;line-height:24px;color:#606266;font-weight:normal;z-index:5;">128</div>
<div class="t" style="left:1644px;top:883.5px;width:300px;text-align:center;font-size:21px;line-height:24px;color:#606266;font-weight:normal;z-index:5;">30</div>
<div class="t" style="left:1791px;top:883.5px;width:300px;text-align:center;font-size:21px;line-height:24px;color:#606266;font-weight:normal;z-index:5;">0</div>
<div class="t" style="left:1938px;top:883.5px;width:300px;text-align:center;font-size:21px;line-height:24px;color:#606266;font-weight:normal;z-index:5;">启用</div>
<svg class="a" style="left:2354px;top:886px;z-index:5" width="18" height="20" viewBox="0 0 18 20"><g fill="none" stroke="#1890ff" stroke-width="1.15" stroke-linejoin="round"><path d="M9.5 2.4 L13.7 4.8 L7.6 15.2 L3.2 18 L3.4 12.8 Z"/><path d="M8 5 L12.2 7.4 M3.4 12.8 L7.6 15.2"/><path d="M9.5 17.6 L16.7 17.6" stroke-linecap="round"/></g></svg>
<div class="t" style="left:2374px;top:885px;font-size:18px;line-height:22px;color:#1890ff;font-weight:normal;z-index:5;">修改</div>
<div class="a" style="left:336px;top:1078px;width:2120px;height:1px;z-index:1;background:#dfe6ec"></div>
<div class="a" style="left:367px;top:1007px;width:21px;height:21px;z-index:2;border:1px solid #dcdfe6;border-radius:3px;background:#fff"></div>
<div class="t" style="left:343.5px;top:1004.5px;width:300px;text-align:center;font-size:21px;line-height:24px;color:#606266;font-weight:normal;z-index:5;">sn8888</div>
<div class="t" style="left:492px;top:1004.5px;width:300px;text-align:center;font-size:21px;line-height:24px;color:#606266;font-weight:normal;z-index:5;">沪锡指数</div>
<div class="a" style="left:752px;top:975px;width:75px;height:75px;z-index:2;border:1px solid #c0c0c0"></div>
<div class="t" style="left:785.75px;top:1004.5px;width:300px;text-align:center;font-size:21px;line-height:24px;color:#606266;font-weight:normal;z-index:5;">期货</div>
<div class="t" style="left:933.25px;top:1004.5px;width:300px;text-align:center;font-size:21px;line-height:24px;color:#606266;font-weight:normal;z-index:5;">0</div>
<div class="t" style="left:1080px;top:1004.5px;width:300px;text-align:center;font-size:21px;line-height:24px;color:#606266;font-weight:normal;z-index:5;">0%</div>
<div class="t" style="left:1497.25px;top:1004.5px;width:300px;text-align:center;font-size:21px;line-height:24px;color:#606266;font-weight:normal;z-index:5;">128</div>
<div class="t" style="left:1644px;top:1004.5px;width:300px;text-align:center;font-size:21px;line-height:24px;color:#606266;font-weight:normal;z-index:5;">30</div>
<div class="t" style="left:1791px;top:1004.5px;width:300px;text-align:center;font-size:21px;line-height:24px;color:#606266;font-weight:normal;z-index:5;">0</div>
<div class="t" style="left:1938px;top:1004.5px;width:300px;text-align:center;font-size:21px;line-height:24px;color:#606266;font-weight:normal;z-index:5;">启用</div>
<svg class="a" style="left:2354px;top:1007px;z-index:5" width="18" height="20" viewBox="0 0 18 20"><g fill="none" stroke="#1890ff" stroke-width="1.15" stroke-linejoin="round"><path d="M9.5 2.4 L13.7 4.8 L7.6 15.2 L3.2 18 L3.4 12.8 Z"/><path d="M8 5 L12.2 7.4 M3.4 12.8 L7.6 15.2"/><path d="M9.5 17.6 L16.7 17.6" stroke-linecap="round"/></g></svg>
<div class="t" style="left:2374px;top:1006px;font-size:18px;line-height:22px;color:#1890ff;font-weight:normal;z-index:5;">修改</div>
<div class="a" style="left:336px;top:1199px;width:2120px;height:1px;z-index:1;background:#dfe6ec"></div>
<div class="a" style="left:367px;top:1128px;width:21px;height:21px;z-index:2;border:1px solid #dcdfe6;border-radius:3px;background:#fff"></div>
<div class="t" style="left:343.5px;top:1125.5px;width:300px;text-align:center;font-size:21px;line-height:24px;color:#606266;font-weight:normal;z-index:5;">rb8888</div>
<div class="t" style="left:492px;top:1125.5px;width:300px;text-align:center;font-size:21px;line-height:24px;color:#606266;font-weight:normal;z-index:5;">螺纹钢指数</div>
<div class="a" style="left:752px;top:1096px;width:75px;height:75px;z-index:2;border:1px solid #c0c0c0"></div>
<div class="t" style="left:785.75px;top:1125.5px;width:300px;text-align:center;font-size:21px;line-height:24px;color:#606266;font-weight:normal;z-index:5;">期货</div>
<div class="t" style="left:933.25px;top:1125.5px;width:300px;text-align:center;font-size:21px;line-height:24px;color:#606266;font-weight:normal;z-index:5;">0</div>
<div class="t" style="left:1080px;top:1125.5px;width:300px;text-align:center;font-size:21px;line-height:24px;color:#606266;font-weight:normal;z-index:5;">0%</div>
<div class="t" style="left:1497.25px;top:1125.5px;width:300px;text-align:center;font-size:21px;line-height:24px;color:#606266;font-weight:normal;z-index:5;">128</div>
<div class="t" style="left:1644px;top:1125.5px;width:300px;text-align:center;font-size:21px;line-height:24px;color:#606266;font-weight:normal;z-index:5;">30</div>
<div class="t" style="left:1791px;top:1125.5px;width:300px;text-align:center;font-size:21px;line-height:24px;color:#606266;font-weight:normal;z-index:5;">0</div>
<div class="t" style="left:1938px;top:1125.5px;width:300px;text-align:center;font-size:21px;line-height:24px;color:#606266;font-weight:normal;z-index:5;">启用</div>
<svg class="a" style="left:2354px;top:1128px;z-index:5" width="18" height="20" viewBox="0 0 18 20"><g fill="none" stroke="#1890ff" stroke-width="1.15" stroke-linejoin="round"><path d="M9.5 2.4 L13.7 4.8 L7.6 15.2 L3.2 18 L3.4 12.8 Z"/><path d="M8 5 L12.2 7.4 M3.4 12.8 L7.6 15.2"/><path d="M9.5 17.6 L16.7 17.6" stroke-linecap="round"/></g></svg>
<div class="t" style="left:2374px;top:1127px;font-size:18px;line-height:22px;color:#1890ff;font-weight:normal;z-index:5;">修改</div>
<div class="a" style="left:336px;top:1320px;width:2120px;height:1px;z-index:1;background:#dfe6ec"></div>
<div class="a" style="left:367px;top:1249px;width:21px;height:21px;z-index:2;border:1px solid #dcdfe6;border-radius:3px;background:#fff"></div>
<div class="t" style="left:343.5px;top:1246.5px;width:300px;text-align:center;font-size:21px;line-height:24px;color:#606266;font-weight:normal;z-index:5;">pb8888</div>
<div class="t" style="left:492px;top:1246.5px;width:300px;text-align:center;font-size:21px;line-height:24px;color:#606266;font-weight:normal;z-index:5;">沪铅指数</div>
<div class="a" style="left:752px;top:1217px;width:75px;height:75px;z-index:2;border:1px solid #c0c0c0"></div>
<div class="t" style="left:785.75px;top:1246.5px;width:300px;text-align:center;font-size:21px;line-height:24px;color:#606266;font-weight:normal;z-index:5;">期货</div>
<div class="t" style="left:933.25px;top:1246.5px;width:300px;text-align:center;font-size:21px;line-height:24px;color:#606266;font-weight:normal;z-index:5;">0</div>
<div class="t" style="left:1080px;top:1246.5px;width:300px;text-align:center;font-size:21px;line-height:24px;color:#606266;font-weight:normal;z-index:5;">0%</div>
<div class="t" style="left:1497.25px;top:1246.5px;width:300px;text-align:center;font-size:21px;line-height:24px;color:#606266;font-weight:normal;z-index:5;">128</div>
<div class="t" style="left:1644px;top:1246.5px;width:300px;text-align:center;font-size:21px;line-height:24px;color:#606266;font-weight:normal;z-index:5;">30</div>
<div class="t" style="left:1791px;top:1246.5px;width:300px;text-align:center;font-size:21px;line-height:24px;color:#606266;font-weight:normal;z-index:5;">0</div>
<div class="t" style="left:1938px;top:1246.5px;width:300px;text-align:center;font-size:21px;line-height:24px;color:#606266;font-weight:normal;z-index:5;">启用</div>
<svg class="a" style="left:2354px;top:1249px;z-index:5" width="18" height="20" viewBox="0 0 18 20"><g fill="none" stroke="#1890ff" stroke-width="1.15" stroke-linejoin="round"><path d="M9.5 2.4 L13.7 4.8 L7.6 15.2 L3.2 18 L3.4 12.8 Z"/><path d="M8 5 L12.2 7.4 M3.4 12.8 L7.6 15.2"/><path d="M9.5 17.6 L16.7 17.6" stroke-linecap="round"/></g></svg>
<div class="t" style="left:2374px;top:1248px;font-size:18px;line-height:22px;color:#1890ff;font-weight:normal;z-index:5;">修改</div>
<div class="a" style="left:336px;top:1441px;width:2120px;height:1px;z-index:1;background:#dfe6ec"></div>
<div class="a" style="left:367px;top:1370px;width:21px;height:21px;z-index:2;border:1px solid #dcdfe6;border-radius:3px;background:#fff"></div>
<div class="t" style="left:343.5px;top:1367.5px;width:300px;text-align:center;font-size:21px;line-height:24px;color:#606266;font-weight:normal;z-index:5;">cu8888</div>
<div class="t" style="left:492px;top:1367.5px;width:300px;text-align:center;font-size:21px;line-height:24px;color:#606266;font-weight:normal;z-index:5;">沪铜指数</div>
<div class="a" style="left:752px;top:1338px;width:75px;height:75px;z-index:2;border:1px solid #c0c0c0"></div>
<div class="t" style="left:785.75px;top:1367.5px;width:300px;text-align:center;font-size:21px;line-height:24px;color:#606266;font-weight:normal;z-index:5;">期货</div>
<div class="t" style="left:933.25px;top:1367.5px;width:300px;text-align:center;font-size:21px;line-height:24px;color:#606266;font-weight:normal;z-index:5;">0</div>
<div class="t" style="left:1080px;top:1367.5px;width:300px;text-align:center;font-size:21px;line-height:24px;color:#606266;font-weight:normal;z-index:5;">0%</div>
<div class="t" style="left:1497.25px;top:1367.5px;width:300px;text-align:center;font-size:21px;line-height:24px;color:#606266;font-weight:normal;z-index:5;">128</div>
<div class="t" style="left:1644px;top:1367.5px;width:300px;text-align:center;font-size:21px;line-height:24px;color:#606266;font-weight:normal;z-index:5;">30</div>
<div class="t" style="left:1791px;top:1367.5px;width:300px;text-align:center;font-size:21px;line-height:24px;color:#606266;font-weight:normal;z-index:5;">0</div>
<div class="t" style="left:1938px;top:1367.5px;width:300px;text-align:center;font-size:21px;line-height:24px;color:#606266;font-weight:normal;z-index:5;">启用</div>
<svg class="a" style="left:2354px;top:1370px;z-index:5" width="18" height="20" viewBox="0 0 18 20"><g fill="none" stroke="#1890ff" stroke-width="1.15" stroke-linejoin="round"><path d="M9.5 2.4 L13.7 4.8 L7.6 15.2 L3.2 18 L3.4 12.8 Z"/><path d="M8 5 L12.2 7.4 M3.4 12.8 L7.6 15.2"/><path d="M9.5 17.6 L16.7 17.6" stroke-linecap="round"/></g></svg>
<div class="t" style="left:2374px;top:1369px;font-size:18px;line-height:22px;color:#1890ff;font-weight:normal;z-index:5;">修改</div>
<div class="a" style="left:1138px;top:1339px;width:200px;height:26px;z-index:8;background:#666062"></div>
<div class="t" style="left:1144px;top:1340px;font-size:18.4px;line-height:24px;color:#fff;font-weight:normal;z-index:9;font-family:'Liberation Mono',monospace;font-weight:bold;">www.tiaozhuan.net</div>
</body></html>
